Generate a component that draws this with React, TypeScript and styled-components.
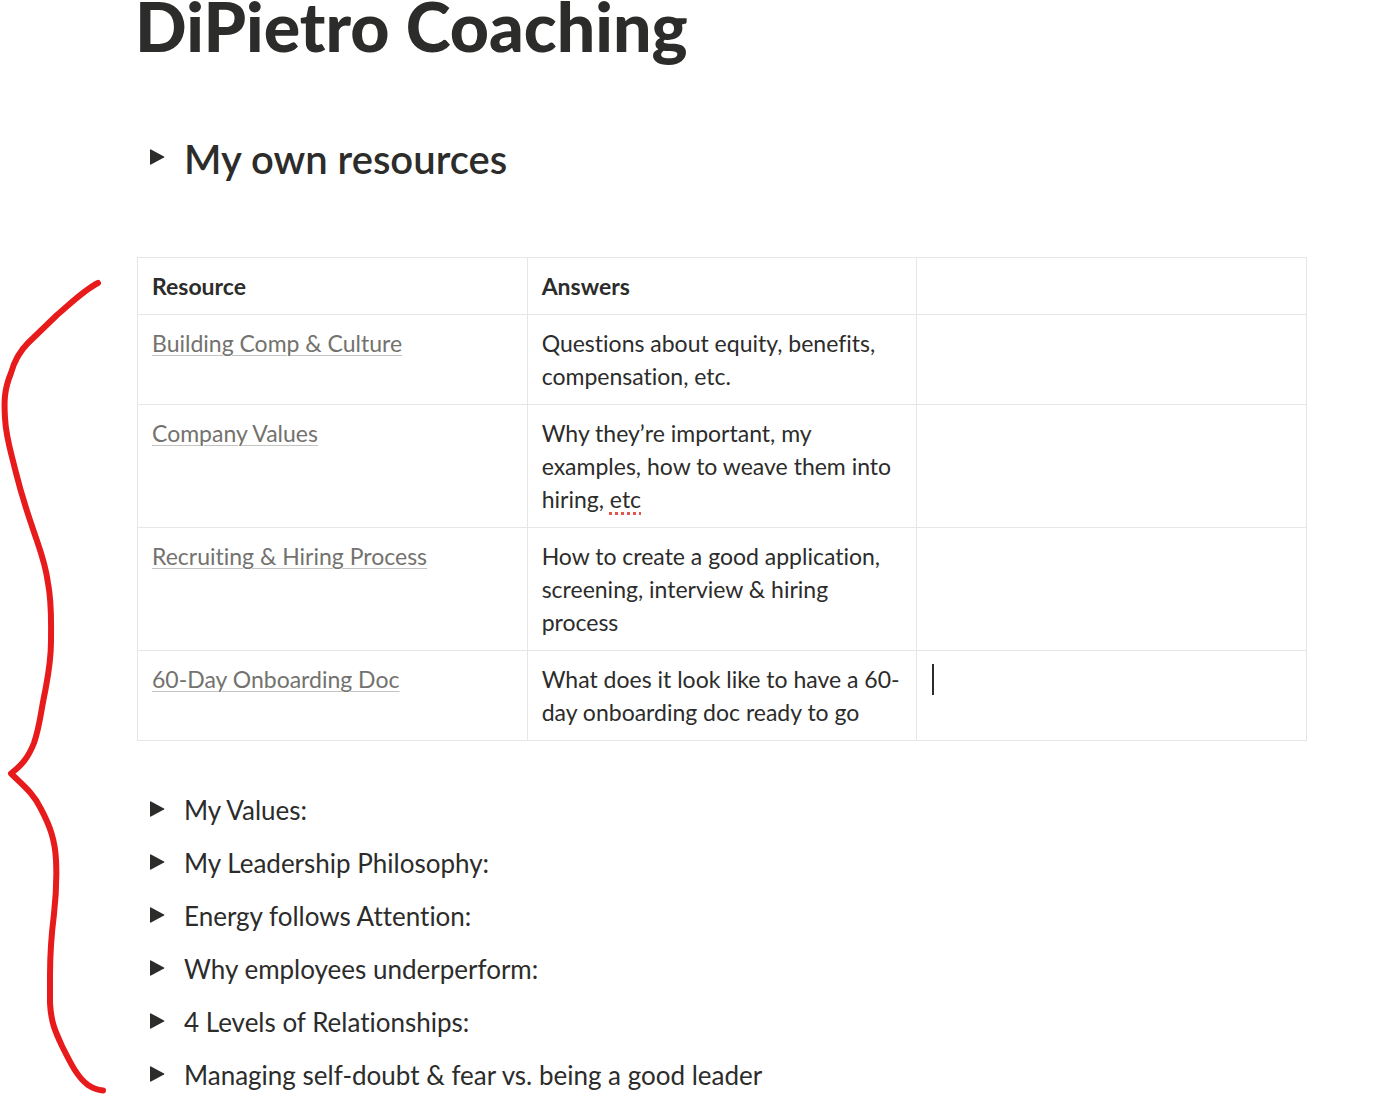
import React from "react";
import styled, { createGlobalStyle } from "styled-components";

const GlobalStyle = createGlobalStyle`
  *, *::before, *::after { box-sizing: border-box; }
  body {
    margin: 0;
    background: #ffffff;
    color: #2c2c2b;
    font-family: Lato, "Open Sans", sans-serif;
    font-variant-ligatures: none;
  }
`;

const Page = styled.main`
  position: relative;
  padding: 0 91px 12px 135px;
`;

const Title = styled.h1`
  margin: 0;
  font-size: 68px;
  line-height: 52px;
  font-weight: 900;
`;

const Content = styled.div`
  padding-left: 2px;
`;

const Toggle = styled.button<{ $heading?: boolean }>`
  display: flex;
  align-items: center;
  gap: 19px;
  width: 100%;
  padding: 0 0 0 13px;
  border: 0;
  background: none;
  color: inherit;
  font-family: inherit;
  font-variant-ligatures: inherit;
  text-align: left;
  cursor: pointer;
  font-size: ${(p) => (p.$heading ? "40px" : "26px")};
  font-weight: ${(p) => (p.$heading ? 600 : 400)};
  line-height: ${(p) => (p.$heading ? "52px" : "39px")};
`;

const Heading = styled.h2`
  margin: 81px 0 72px;
`;

const Arrow = styled.svg`
  flex: none;
  width: 15px;
  height: 16px;
  margin-bottom: 4px;
  fill: #2c2c2b;
`;

const Table = styled.table`
  width: 100%;
  table-layout: fixed;
  border-collapse: collapse;
  font-size: 23px;
  line-height: 33px;
`;

const cell = `
  padding: 12px 14px 11px;
  border: 1px solid #e6e6e5;
  text-align: left;
  vertical-align: top;
`;

const HeadCell = styled.th`
  ${cell}
  font-weight: 700;
`;

const Cell = styled.td`
  ${cell}
`;

const PageLink = styled.a`
  color: #73726e;
  text-decoration: underline;
  text-decoration-color: #c4c4c2;
  text-decoration-thickness: 1px;
  text-underline-offset: 3px;
`;

const Misspelled = styled.span`
  text-decoration: underline dotted #e5534b 3px;
  text-underline-offset: 4px;
  text-decoration-skip-ink: none;
`;

const Caret = styled.span`
  display: block;
  width: 2px;
  height: 31px;
  margin: 1px;
  background: #2c2c2b;
`;

const List = styled.ul`
  display: flex;
  flex-direction: column;
  gap: 14px;
  margin: 50px 0 0;
  padding: 0;
  list-style: none;
`;

const Brace = styled.svg`
  position: absolute;
  top: 270px;
  left: 0;
  width: 120px;
  height: 836px;
  pointer-events: none;
`;

const resources: { name: string; answer: React.ReactNode; editing?: boolean }[] = [
  { name: "Building Comp & Culture", answer: "Questions about equity, benefits, compensation, etc." },
  {
    name: "Company Values",
    answer: (
      <>
        Why they’re important, my examples, how to weave them into hiring, <Misspelled>etc</Misspelled>
      </>
    ),
  },
  {
    name: "Recruiting & Hiring Process",
    answer: "How to create a good application, screening, interview & hiring process",
  },
  {
    name: "60-Day Onboarding Doc",
    answer: "What does it look like to have a 60-day onboarding doc ready to go",
    editing: true,
  },
];

const topics = [
  "My Values:",
  "My Leadership Philosophy:",
  "Energy follows Attention:",
  "Why employees underperform:",
  "4 Levels of Relationships:",
  "Managing self-doubt & fear vs. being a good leader",
];

function ToggleRow({ label, heading }: { label: string; heading?: boolean }) {
  return (
    <Toggle type="button" aria-expanded={false} $heading={heading}>
      <Arrow viewBox="0 0 15 16" aria-hidden="true">
        <path d="M0 1Q0 0 1 0.4L14 7.4Q15 8 14 8.6L1 15.6Q0 16 0 15Z" />
      </Arrow>
      <span>{label}</span>
    </Toggle>
  );
}

export default function App() {
  return (
    <>
      <GlobalStyle />
      <Page>
        <Title>DiPietro Coaching</Title>
        <Content>
          <Heading>
            <ToggleRow label="My own resources" heading />
          </Heading>
          <Table>
            <thead>
              <tr>
                <HeadCell scope="col">Resource</HeadCell>
                <HeadCell scope="col">Answers</HeadCell>
                <Cell />
              </tr>
            </thead>
            <tbody>
              {resources.map((r) => (
                <tr key={r.name}>
                  <Cell>
                    <PageLink href="#">{r.name}</PageLink>
                  </Cell>
                  <Cell>{r.answer}</Cell>
                  <Cell>{r.editing && <Caret />}</Cell>
                </tr>
              ))}
            </tbody>
          </Table>
          <List>
            {topics.map((t) => (
              <li key={t}>
                <ToggleRow label={t} />
              </li>
            ))}
          </List>
        </Content>
        <Brace viewBox="0 270 120 836" aria-hidden="true">
          <path
            d="M98 283C84 290 70 304 57 315L28 343C18 353 14 362 11 373C4 390 4 402 5 418C6 438 11 452 15 469C20 489 25 506 32 526C38 545 45 560 48 583C52 604 51 622 51 641C51 662 48 676 45 692C41 710 40 726 34 743C28 758 22 765 11 773.500C24 786 34 794 41 809C50 826 55 840 56 860C57 880 56 896 54 914C51 938 50 956 50 975L50 1003C51 1022 55 1031 62 1046C70 1062 77 1077 88 1085C94 1089 98 1090 103 1090.500"
            fill="none"
            stroke="#e71b1b"
            strokeWidth="6"
            strokeLinecap="round"
            strokeLinejoin="round"
          />
        </Brace>
      </Page>
    </>
  );
}
